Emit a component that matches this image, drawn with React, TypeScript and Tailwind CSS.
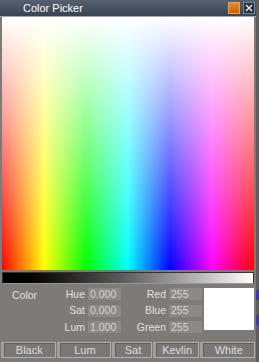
import React from 'react';

const font = { fontFamily: '"Liberation Sans", Arial, sans-serif' };

const Field = ({ label, value }: { label: string; value: string }) => (
  <div className="flex h-[12px] items-center">
    <span className="w-[48px] pr-[3px] text-right leading-none text-[#e2e0de]">{label}</span>
    <span className="flex h-[12px] w-[33px] items-center bg-[#8d8987] pl-[2px] leading-none text-[#d6d4d2]">{value}</span>
  </div>
);

const buttons = [
  { label: 'Black', w: 'w-[55px]' },
  { label: 'Lum', w: 'w-[55px]' },
  { label: 'Sat', w: 'w-[40px]' },
  { label: 'Kevlin', w: 'w-[47px]' },
  { label: 'White', w: 'w-[55px]' },
];

export default function App() {
  return (
    <div className="flex h-[362px] w-[259px] bg-[#5f5c5b] text-[10.5px]" style={font}>
      <div className="flex w-[256px] flex-col bg-[#7e7a78]">
        <div className="flex h-[17px] items-center border-b border-[#a9a7a6] bg-linear-to-b from-[#56606f] to-[#3a4352] pl-[23px] pr-[1px]">
          <span className="flex-1 text-[11px] leading-none text-white">Color Picker</span>
          <span className="mr-[3px] h-[12px] w-[12px] border border-[#f0a050] bg-linear-to-b from-[#e88a2c] to-[#c4620f]" />
          <span className="flex h-[12px] w-[12px] items-center justify-center border border-[#7a8494] bg-[#283140]">
            <svg width="8" height="8" viewBox="0 0 8 8">
              <path d="M1 1L7 7M7 1L1 7" stroke="#f2f2f2" strokeWidth="1.3" />
            </svg>
          </span>
        </div>
        <div className="mx-[2px] h-[253px] bg-[linear-gradient(to_right,#f00,#ff0,#0f0,#0ff,#00f,#f0f,#f00)]">
          <div className="h-full w-full bg-linear-to-b from-white to-white/0" />
        </div>
        <div className="mx-[2px] mt-[2px] h-[12px] border border-[#333] border-b-[#9a9694] bg-linear-to-r from-black to-white" />
        <div className="mt-[4px] flex pl-[12px]">
          <div className="w-[28px] pt-[1px] leading-[12px] text-[#e2e0de]">Color</div>
          <div className="flex flex-col gap-[4.5px]">
            <Field label="Hue" value="0.000" />
            <Field label="Sat" value="0.000" />
            <Field label="Lum" value="1.000" />
          </div>
          <div className="flex flex-col gap-[4.5px]">
            <Field label="Red" value="255" />
            <Field label="Blue" value="255" />
            <Field label="Green" value="255" />
          </div>
          <div className="ml-[2px] h-[42px] w-[50px] bg-white" />
        </div>
        <div className="mt-[9px] flex gap-[1px] px-[1px]">
          {buttons.map((b) => (
            <div
              key={b.label}
              className={`${b.w} flex h-[16px] items-center justify-center border border-[#b3afad] border-l-[3px] border-l-[#a19d9b] bg-[#7b7775] text-[11px] leading-none text-[#dcdce4] shadow-[inset_1px_1px_0_#5c5957]`}
            >
              {b.label}
            </div>
          ))}
        </div>
      </div>
      <div className="flex w-[3px] flex-col">
        <div className="h-[290px] bg-[#5f5c5b]" />
        <div className="h-[10px] bg-[#3c3ca8]" />
        <div className="h-[15px] bg-[#5f5c5b]" />
        <div className="h-[10px] bg-[#3c3ca8]" />
      </div>
    </div>
  );
}
